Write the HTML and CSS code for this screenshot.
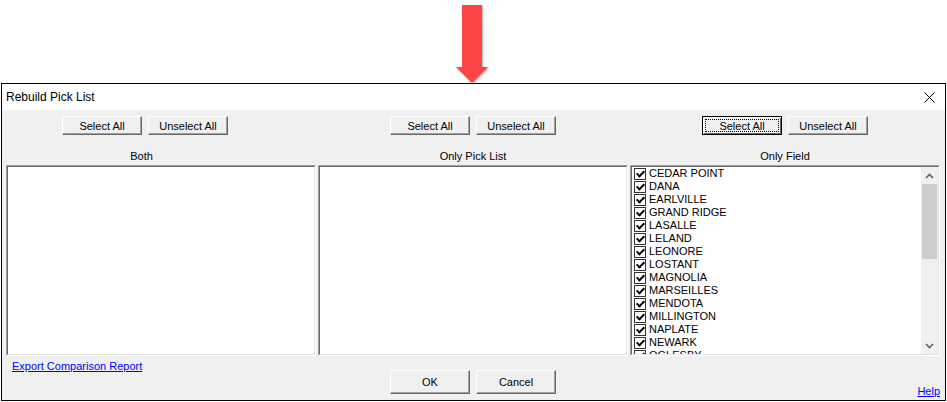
FILE: index.html
```html
<!DOCTYPE html>
<html lang="en">
<head>
    <meta charset="UTF-8">
    <meta name="viewport" content="width=device-width, initial-scale=1.0">
    <title>Rebuild Pick List</title>
    <link rel="stylesheet" href="styles.css">
</head>
<body>
    <div class="annot">
        <svg class="arrow" width="36" height="84" viewBox="454 0 36 84">
            <path d="M462 5H482V67H488L472 83L456 67H462Z" fill="#fd4545"/>
        </svg>
    </div>

    <div class="window">
        <div class="titlebar">
            <span class="title">Rebuild Pick List</span>
            <svg class="close" width="11" height="11" viewBox="0 0 11 11">
                <path d="M0.5 0.5L10.5 10.5M10.5 0.5L0.5 10.5" stroke="#000" stroke-width="1"/>
            </svg>
        </div>

        <div class="client">
            <div class="cols">
                <div class="col col-both">
                    <div class="btn-row">
                        <button class="btn">Select All</button>
                        <button class="btn">Unselect All</button>
                    </div>
                    <div class="cap">Both</div>
                    <div class="list"><div class="list-in"></div></div>
                </div>

                <div class="col">
                    <div class="btn-row">
                        <button class="btn">Select All</button>
                        <button class="btn">Unselect All</button>
                    </div>
                    <div class="cap">Only Pick List</div>
                    <div class="list"><div class="list-in"></div></div>
                </div>

                <div class="col">
                    <div class="btn-row">
                        <button class="btn btn-def">Select All</button>
                        <button class="btn">Unselect All</button>
                    </div>
                    <div class="cap">Only Field</div>
                    <div class="list">
                        <div class="list-in">
                            <div class="items" id="fieldItems"></div>
                            <div class="sb">
                                <div class="sb-btn">
                                    <svg width="9" height="6" viewBox="0 0 9 6"><path d="M1 5L4.5 1.5L8 5" fill="none" stroke="#606060" stroke-width="1.6"/></svg>
                                </div>
                                <div class="sb-thumb"></div>
                                <div class="sb-track"></div>
                                <div class="sb-btn">
                                    <svg width="9" height="6" viewBox="0 0 9 6"><path d="M1 1L4.5 4.5L8 1" fill="none" stroke="#606060" stroke-width="1.6"/></svg>
                                </div>
                            </div>
                        </div>
                    </div>
                </div>
            </div>

            <div class="footer">
                <a class="link export" href="#">Export Comparison Report</a>
                <div class="foot-btns">
                    <button class="btn btn-big">OK</button>
                    <button class="btn btn-big">Cancel</button>
                </div>
                <a class="link help" href="#">Help</a>
            </div>
        </div>
    </div>

    <script>
        // lista de campos marcados
        const campos = ["CEDAR POINT", "DANA", "EARLVILLE", "GRAND RIDGE", "LASALLE", "LELAND",
            "LEONORE", "LOSTANT", "MAGNOLIA", "MARSEILLES", "MENDOTA", "MILLINGTON",
            "NAPLATE", "NEWARK", "OGLESBY"];

        const cont = document.getElementById("fieldItems");
        campos.forEach(function (nombre) {
            const fila = document.createElement("div");
            fila.className = "item";
            fila.innerHTML = '<span class="cb"></span><span>' + nombre + '</span>';
            cont.appendChild(fila);
        });
    </script>
</body>
</html>
```

FILE: styles.css
```css
body {
    margin: 0;
    width: 947px;
    height: 402px;
    overflow: hidden;
    background: #fff;
    font-family: "Liberation Sans", Arial, sans-serif;
    font-size: 11px;
    color: #000;
}
.annot {
    height: 83px;
    padding-left: 454px;
    box-sizing: border-box;
}
.arrow {
    display: block;
    filter: drop-shadow(1px 1px 1px rgba(0, 0, 0, 0.35));
}
.window {
    margin-left: 1px;
    width: 945px;
    height: 318px;
    box-sizing: border-box;
    border: 1px solid #000;
    background: #f0f0f0;
    display: flex;
    flex-direction: column;
}
.titlebar {
    height: 26px;
    flex: none;
    background: #fff;
    display: flex;
    align-items: center;
    justify-content: space-between;
    padding: 0 10px 0 4px;
}
.title {
    font-size: 12px;
}
.close {
    display: block;
}
.client {
    flex: 1;
    display: flex;
    flex-direction: column;
    padding: 0 5px 0 4px;
}
.cols {
    display: grid;
    grid-template-columns: repeat(3, 310px);
    column-gap: 2px;
}
.col {
    display: flex;
    flex-direction: column;
}
.btn-row {
    display: flex;
    justify-content: center;
    gap: 6px;
    padding-top: 6px;
}
.col-both .btn-row {
    padding-right: 32px;
}
.btn {
    width: 80px;
    height: 19px;
    padding: 0;
    margin: 0;
    font: inherit;
    color: #000;
    background: #f0f0f0;
    border: 1px solid;
    border-color: #fff #696969 #696969 #fff;
    box-shadow: inset -1px -1px #a0a0a0;
    box-sizing: border-box;
}
.btn-def {
    border-color: #000;
    box-shadow: inset 1px 1px #fff, inset -1px -1px #696969;
    outline: 1px dotted #000;
    outline-offset: -4px;
}
.btn-big {
    height: 24px;
}
.cap {
    margin-top: 14px;
    margin-bottom: 1px;
    line-height: 15px;
    text-align: center;
}
.col-both .cap {
    padding-right: 39px;
}
.list {
    height: 191px;
    box-sizing: border-box;
    border: 1px solid;
    border-color: #a0a0a0 #fff #fff #a0a0a0;
}
.list-in {
    height: 100%;
    box-sizing: border-box;
    border: 1px solid;
    border-color: #696969 #e3e3e3 #e3e3e3 #696969;
    background: #fff;
    display: flex;
}
.items {
    flex: 1;
    overflow: hidden;
    padding-left: 2px;
}
.item {
    display: flex;
    align-items: center;
    gap: 3px;
    height: 13px;
    line-height: 13px;
    white-space: nowrap;
}
.cb {
    width: 12px;
    height: 12px;
    flex: none;
    box-sizing: border-box;
    border: 1px solid #333;
    background: #fff;
    display: flex;
    align-items: center;
    justify-content: center;
}
.cb::after {
    content: "";
    width: 3px;
    height: 6px;
    margin-top: -2px;
    border: solid #000;
    border-width: 0 2px 2px 0;
    transform: rotate(45deg);
}
.sb {
    width: 17px;
    flex: none;
    background: #f0f0f0;
    display: flex;
    flex-direction: column;
}
.sb-btn {
    height: 17px;
    flex: none;
    display: flex;
    align-items: center;
    justify-content: center;
}
.sb-btn svg {
    display: block;
}
.sb-thumb {
    height: 75px;
    flex: none;
    margin: 0 1px;
    background: #cdcdcd;
}
.sb-track {
    flex: 1;
}
.footer {
    flex: 1;
    display: grid;
    grid-template-columns: 1fr auto 1fr;
}
.link {
    color: #0000ff;
    text-decoration: underline;
    line-height: 15px;
}
.export {
    align-self: start;
    justify-self: start;
    margin: 3px 0 0 6px;
}
.foot-btns {
    display: flex;
    gap: 6px;
    padding-top: 14px;
    align-self: start;
}
.help {
    align-self: end;
    justify-self: end;
    margin-bottom: 1px;
}
```
